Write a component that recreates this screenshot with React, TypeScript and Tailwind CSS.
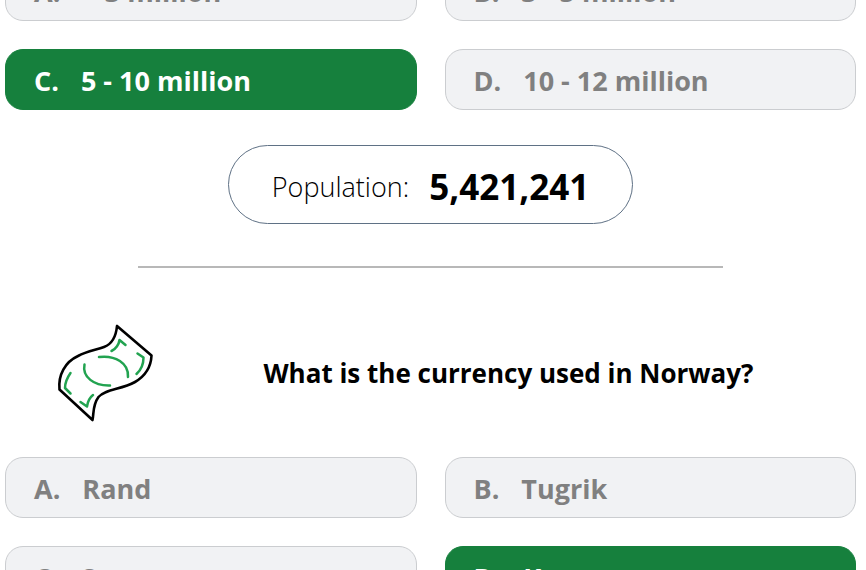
type OptionProps = {
  letter: string;
  label: string;
  correct?: boolean;
};

function Option({ letter, label, correct = false }: OptionProps) {
  const tone = correct
    ? "border-[#16803d] bg-[#16803d] text-white"
    : "border-[#cbcdd0] bg-[#f1f2f4] text-[#808080]";
  return (
    <button
      type="button"
      className={`flex h-[61px] items-center gap-[22px] rounded-[18px] border px-7 pt-0.5 text-left text-[27px] leading-9 font-bold ${tone}`}
    >
      <span>{letter}.</span>
      <span>{label}</span>
    </button>
  );
}

function BanknoteIcon() {
  return (
    <svg
      viewBox="0 0 120 115"
      className="h-[115px] w-[120px] shrink-0"
      fill="none"
      strokeLinecap="round"
      strokeLinejoin="round"
      aria-hidden="true"
    >
      <path
        d="M72 11C71 22 67 29 59 32C51 35 42 36 33 41C20 47 13 60 14.500 74.500L47.500 105C49 98 47.500 90 53.500 82C61 73.500 76 75 90 67C101 60.500 106 52 106.500 40.500Z"
        stroke="#000"
        strokeWidth="2.600"
      />
      <g stroke="#22a350" strokeWidth="2.500">
        <path d="M66.500 36C71 34 74 29 74.500 25L80.500 30" />
        <path d="M92.500 38.500L98.500 42.500C98.500 49 96 55 91.500 59" />
        <path d="M54 42C70 40 84 48 83 62" />
        <path d="M39.500 49.500C37 62 49 71 65 70.500" />
        <path d="M25.500 58C22 63 20 68 20 73L25.500 78.500" />
        <path d="M35.500 87L42 91.500C42.500 88 44 83 48 80" />
      </g>
    </svg>
  );
}

export default function App() {
  return (
    <main className="h-screen overflow-hidden bg-white pr-2.5 pl-[5px] font-['Open_Sans','Noto_Sans',sans-serif] text-black">
      <section className="-mt-10">
        <div className="grid grid-cols-2 gap-7">
          <Option letter="A" label="< 3 million" />
          <Option letter="B" label="3 - 5 million" />
          <Option letter="C" label="5 - 10 million" correct />
          <Option letter="D" label="10 - 12 million" />
        </div>
        <div className="mx-auto mt-[35px] flex h-[79px] w-[405px] max-w-full items-center justify-center gap-5 rounded-full border border-[#5f7185] pt-1">
          <span className="text-[27px] leading-9 font-[350]">Population:</span>
          <strong className="text-[35px] leading-9 font-bold">5,421,241</strong>
        </div>
      </section>
      <hr className="mx-auto mt-[42px] w-[585px] max-w-full border-t-2 border-[#b8b8b8]" />
      <section className="mt-[47px]">
        <div className="flex items-center pl-10">
          <BanknoteIcon />
          <h2 className="flex-1 pr-1 text-center text-[26px] leading-9 font-bold">
            What is the currency used in Norway?
          </h2>
        </div>
        <div className="mt-[27px] grid grid-cols-2 gap-7">
          <Option letter="A" label="Rand" />
          <Option letter="B" label="Tugrik" />
          <Option letter="C" label="Som" />
          <Option letter="D" label="Krone" correct />
        </div>
      </section>
    </main>
  );
}
